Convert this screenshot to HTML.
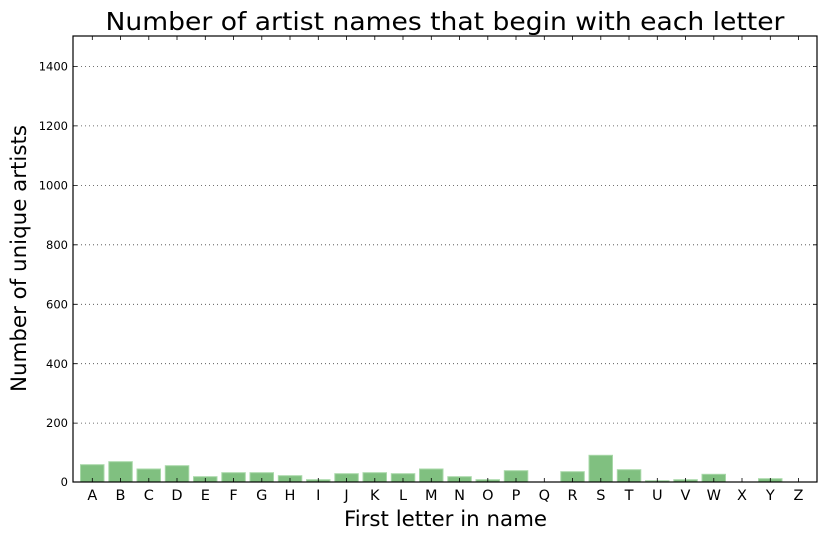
<!DOCTYPE html>
<html><head><style>body{margin:0;background:#fff}svg{display:block}</style></head><body>
<svg width="826" height="539" xmlns="http://www.w3.org/2000/svg" font-family="DejaVu Sans, sans-serif">
<rect width="826" height="539" fill="#fff"/>
<text x="445" y="30" font-size="24.5" text-anchor="middle" textLength="679" lengthAdjust="spacingAndGlyphs">Number of artist names that begin with each letter</text>
<g stroke="#444" stroke-width="0.8" stroke-dasharray="1,3">
<line x1="73" x2="817" y1="66.5" y2="66.5"/><line x1="73" x2="817" y1="125.9" y2="125.9"/><line x1="73" x2="817" y1="185.4" y2="185.4"/><line x1="73" x2="817" y1="244.8" y2="244.8"/><line x1="73" x2="817" y1="304.3" y2="304.3"/><line x1="73" x2="817" y1="363.7" y2="363.7"/><line x1="73" x2="817" y1="423.1" y2="423.1"/>
</g>
<g font-size="11.5" text-anchor="end">
<text x="68" y="70.5">1400</text><text x="68" y="130">1200</text><text x="68" y="189.5">1000</text><text x="68" y="249">800</text><text x="68" y="308.5">600</text><text x="68" y="368">400</text><text x="68" y="427">200</text><text x="68" y="486">0</text>
</g>
<g fill="#80c080" stroke="#a8d8a8" stroke-width="1">
<rect x="80.5" y="464.7" width="23.5" height="17.3"/>
<rect x="108.8" y="461.7" width="23.5" height="20.3"/>
<rect x="137" y="469" width="23.5" height="13"/>
<rect x="165.3" y="465.7" width="23.5" height="16.3"/>
<rect x="193.5" y="476.7" width="23.5" height="5.3"/>
<rect x="221.8" y="472.7" width="23.5" height="9.3"/>
<rect x="250" y="472.7" width="23.5" height="9.3"/>
<rect x="278.3" y="475.7" width="23.5" height="6.3"/>
<rect x="306.5" y="479.7" width="23.5" height="2.3"/>
<rect x="334.8" y="473.7" width="23.5" height="8.3"/>
<rect x="363" y="472.7" width="23.5" height="9.3"/>
<rect x="391.3" y="473.7" width="23.5" height="8.3"/>
<rect x="419.5" y="469" width="23.5" height="13"/>
<rect x="447.8" y="476.7" width="23.5" height="5.3"/>
<rect x="476" y="479.7" width="23.5" height="2.3"/>
<rect x="504.3" y="470.7" width="23.5" height="11.3"/>
<rect x="560.8" y="471.7" width="23.5" height="10.3"/>
<rect x="589" y="455.3" width="23.5" height="26.7"/>
<rect x="617.3" y="469.7" width="23.5" height="12.3"/>
<rect x="645.5" y="480.7" width="23.5" height="1.3"/>
<rect x="673.8" y="479.7" width="23.5" height="2.3"/>
<rect x="702" y="474.3" width="23.5" height="7.7"/>
<rect x="758.5" y="478.7" width="23.5" height="3.3"/>
</g>
<g stroke="#000" stroke-width="0.8">
<path d="M92.3 482v-4M120.5 482v-4M148.8 482v-4M177 482v-4M205.3 482v-4M233.5 482v-4M261.8 482v-4M290 482v-4M318.3 482v-4M346.5 482v-4M374.8 482v-4M403 482v-4M431.3 482v-4M459.5 482v-4M487.8 482v-4M516 482v-4M544.3 482v-4M572.5 482v-4M600.8 482v-4M629 482v-4M657.3 482v-4M685.5 482v-4M713.8 482v-4M742 482v-4M770.3 482v-4M798.5 482v-4"/>
<path d="M92.3 36v4M120.5 36v4M148.8 36v4M177 36v4M205.3 36v4M233.5 36v4M261.8 36v4M290 36v4M318.3 36v4M346.5 36v4M374.8 36v4M403 36v4M431.3 36v4M459.5 36v4M487.8 36v4M516 36v4M544.3 36v4M572.5 36v4M600.8 36v4M629 36v4M657.3 36v4M685.5 36v4M713.8 36v4M742 36v4M770.3 36v4M798.5 36v4"/>
<path d="M73 66.5h4M73 125.9h4M73 185.4h4M73 244.8h4M73 304.3h4M73 363.7h4M73 423.1h4M817 66.5h-4M817 125.9h-4M817 185.4h-4M817 244.8h-4M817 304.3h-4M817 363.7h-4M817 423.1h-4"/>
</g>
<rect x="73" y="36" width="744" height="446" fill="none" stroke="#000" stroke-width="1.2"/>
<g font-size="14.5" text-anchor="middle">
<text x="92.3" y="500">A</text><text x="120.5" y="500">B</text><text x="148.8" y="500">C</text><text x="177" y="500">D</text><text x="205.3" y="500">E</text><text x="233.5" y="500">F</text><text x="261.8" y="500">G</text><text x="290" y="500">H</text><text x="318.3" y="500">I</text><text x="346.5" y="500">J</text><text x="374.8" y="500">K</text><text x="403" y="500">L</text><text x="431.3" y="500">M</text><text x="459.5" y="500">N</text><text x="487.8" y="500">O</text><text x="516" y="500">P</text><text x="544.3" y="500">Q</text><text x="572.5" y="500">R</text><text x="600.8" y="500">S</text><text x="629" y="500">T</text><text x="657.3" y="500">U</text><text x="685.5" y="500">V</text><text x="713.8" y="500">W</text><text x="742" y="500">X</text><text x="770.3" y="500">Y</text><text x="798.5" y="500">Z</text>
</g>
<text x="445.5" y="526" font-size="21" text-anchor="middle" textLength="203" lengthAdjust="spacingAndGlyphs">First letter in name</text>
<text transform="translate(26,258.5) rotate(-90)" font-size="21" text-anchor="middle" textLength="267" lengthAdjust="spacingAndGlyphs">Number of unique artists</text>
</svg>
</body></html>
